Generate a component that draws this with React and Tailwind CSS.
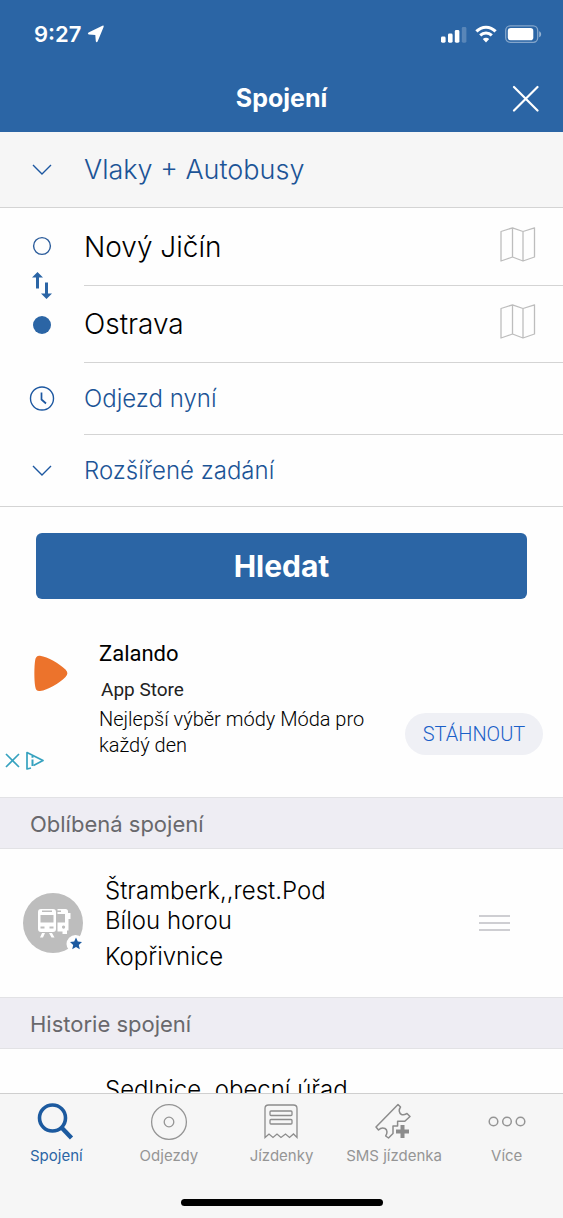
import React, { useState } from "react";

const Chevron = () => (
  <svg className="w-5 h-3" viewBox="0 0 20 12" fill="none" stroke="#1c57a0" strokeWidth="1.4">
    <path d="M1 1L10 10L19 1" />
  </svg>
);

const MapIcon = () => (
  <svg className="w-9 h-9" viewBox="0 0 36 36" fill="none" stroke="#bdbdbd" strokeWidth="1.3" strokeLinejoin="round">
    <path d="M1 4.5L12.5 .8L23 4.5L34.500 .8V30L23 34L12.500 30L1 34ZM12.500 .8V30M23 4.500V34" />
  </svg>
);

const StatusBar = () => (
  <div className="flex items-center justify-between h-[68px] pl-[34px] pr-[21px]">
    <div className="flex items-center gap-1.5">
      <span className="text-[22px] leading-7 font-semibold">9:27</span>
      <svg className="w-4.5 h-4.5" viewBox="0 0 18 18" fill="#fff">
        <path d="M15.4 .7Q17.200 .2 16.600 2L10.600 16.400Q9.600 18 8.800 16.200L8.300 10L1.800 9.400Q0 8.700 1.500 7.400Z" />
      </svg>
    </div>
    <div className="flex items-center gap-2">
      <svg className="w-[26px] h-[18px]" viewBox="0 0 26 18" fill="#fff">
        <rect x="0" y="11.500" width="4.600" height="6.200" rx="1.400" />
        <rect x="7" y="8.500" width="4.600" height="9.200" rx="1.400" />
        <rect x="13.800" y="5" width="4.600" height="12.700" rx="1.400" />
        <rect x="20.800" y="2" width="4.600" height="15.700" rx="1.400" opacity="0.22" />
      </svg>
      <svg className="w-[22px] h-[18px]" viewBox="0 0 22 18" fill="none" stroke="#fff" strokeWidth="3">
        <path d="M1.4 6.4C6.8 .7 15.2 .7 20.6 6.4" />
        <path d="M5.2 10.4C8.5 7.2 13.5 7.2 16.8 10.4" />
        <path d="M11 17.4L7.8 14.1C9.6 12.3 12.4 12.3 14.2 14.1Z" fill="#fff" stroke="none" />
      </svg>
      <svg className="w-[37px] h-[18px]" viewBox="0 0 37 18" fill="none">
        <rect x="0.7" y="0.900" width="32" height="16.400" rx="4.500" stroke="#fff" strokeOpacity="0.42" strokeWidth="1.3" />
        <rect x="2.800" y="3" width="25.500" height="12.200" rx="2.800" fill="#fff" />
        <path d="M34.200 6.200C36.800 7.200 36.800 11.200 34.200 12.200Z" fill="#fff" fillOpacity="0.5" />
      </svg>
    </div>
  </div>
);

const tabs = [
  {
    label: "Spojení",
    icon: (
      <g stroke="#1c5a9f" fill="none">
        <circle cx="15.500" cy="16" r="13" strokeWidth="3.6" />
        <path d="M24.500 25.500L34.500 36" strokeWidth="4.4" />
      </g>
    ),
  },
  {
    label: "Odjezdy",
    icon: (
      <g stroke="#959595" fill="none" strokeWidth="1.3">
        <circle cx="19" cy="20" r="17.4" />
        <circle cx="19" cy="20" r="4.8" />
      </g>
    ),
  },
  {
    label: "Jízdenky",
    icon: (
      <g stroke="#8c8c8c" fill="none" strokeWidth="1.3">
        <path d="M3 35.5V6.5Q3 3 6.5 3H31.500Q35 3 35 6.5V35.500L31.500 32L27.500 35.500L23.500 32L19 35.500L15 32L11 35.500L7 32Z" />
        <rect x="8" y="9" width="22" height="4.500" rx="1" />
        <rect x="8" y="17.500" width="22" height="4.500" rx="1" />
      </g>
    ),
  },
  {
    label: "SMS jízdenka",
    icon: (
      <g>
        <path
          d="M23 2.500L25.500 5C23.500 8 24 11 26.500 12.500C29 13.500 31 12 32 11.500L35 14.500L29.800 19.300H22.600V24H18V31.500L13.500 36L10.700 34C12.500 31 12.500 28 10 26.500C7.500 25.500 5 26.500 3.500 28L1 25L23 2.500Z"
          fill="none"
          stroke="#8c8c8c"
          strokeWidth="1.500"
          strokeLinejoin="round"
        />
        <path d="M27.500 23V36M21 29.500H34" stroke="#8c8c8c" strokeWidth="4" />
      </g>
    ),
  },
  {
    label: "Více",
    icon: (
      <g stroke="#959595" fill="none" strokeWidth="1.500">
        <circle cx="5.500" cy="19.500" r="4.300" />
        <circle cx="19" cy="19.500" r="4.300" />
        <circle cx="32.500" cy="19.500" r="4.300" />
      </g>
    ),
  },
];

const SectionTitle = ({ children }) => (
  <h2 className="h-[52px] flex items-center pt-0.5 pl-[30px] bg-[#eeedf3] border-y border-[#e2e2e5] text-[22px] leading-7 text-[#68686c]">
    {children}
  </h2>
);

export default function App() {
  const [from, setFrom] = useState("Nový Jičín");
  const [to, setTo] = useState("Ostrava");
  const [activeTab, setActiveTab] = useState("Spojení");

  const swapStations = () => {
    setFrom(to);
    setTo(from);
  };

  return (
    <div className="h-screen flex flex-col bg-[#fefefe] text-black font-[Inter,sans-serif]">
      {/* Header */}
      <header className="shrink-0 bg-[#2b65a5] text-white">
        <StatusBar />
        <div className="grid grid-cols-[1fr_auto_1fr] items-center h-16 px-6 pb-1">
          <h1 className="col-start-2 text-[25px] leading-8 font-bold">Spojení</h1>
          <button aria-label="Zavřít" className="justify-self-end">
            <svg className="w-[27px] h-[27px]" viewBox="0 0 27 27" stroke="#fff" strokeWidth="2.200" strokeLinecap="round">
              <path d="M2 2L25.500 25.500M25.500 2L2 25.500" />
            </svg>
          </button>
        </div>
      </header>

      <main className="flex-1 min-h-0 overflow-y-auto [scrollbar-width:none]">
        {/* Transport type */}
        <button className="w-full h-19 flex items-center bg-[#f6f6f6] border-b border-[#d4d4d4] text-[27px] leading-8 font-light text-[#1c5496]">
          <span className="w-[84px] flex justify-center">
            <Chevron />
          </span>
          Vlaky + Autobusy
        </button>

        {/* Search form */}
        <form onSubmit={(e) => e.preventDefault()}>
          <div className="flex">
            <div className="w-[84px] h-[155px] flex flex-col items-center justify-center gap-4">
              <svg className="w-5 h-5" viewBox="0 0 20 20" fill="none" stroke="#2b5c9b" strokeWidth="1.4">
                <circle cx="10" cy="10" r="8.400" />
              </svg>
              <button type="button" aria-label="Prohodit" onClick={swapStations}>
                <svg className="w-5 h-[27px]" viewBox="0 0 20 27" fill="#2b65a5">
                  <path d="M5.500 0L11 5.500H7V16.500H4V5.500H0Z" />
                  <path d="M14.500 27L9 21.500H13V10.500H16V21.500H20Z" />
                </svg>
              </button>
              <svg className="w-5 h-5" viewBox="0 0 20 20" fill="#2b65a5">
                <circle cx="10" cy="10" r="9" />
              </svg>
            </div>
            <div className="flex-1 min-w-0">
              <div className="h-[78px] flex items-center pr-[27px] border-b border-[#d4d4d4]">
                <input
                  aria-label="Odkud"
                  value={from}
                  onChange={(e) => setFrom(e.target.value)}
                  className="flex-1 min-w-0 text-[28px] leading-8 font-light outline-none"
                />
                <button type="button" aria-label="Vybrat na mapě" className="pb-1">
                  <MapIcon />
                </button>
              </div>
              <div className="h-[77px] flex items-center pr-[27px] border-b border-[#d4d4d4]">
                <input
                  aria-label="Kam"
                  value={to}
                  onChange={(e) => setTo(e.target.value)}
                  className="flex-1 min-w-0 text-[28px] leading-8 font-light outline-none"
                />
                <button type="button" aria-label="Vybrat na mapě" className="pb-1">
                  <MapIcon />
                </button>
              </div>
            </div>
          </div>

          <button type="button" className="w-full flex items-center text-[24px] leading-8 font-light text-[#1c5496]">
            <span className="w-[84px] flex justify-center">
              <svg className="w-[26px] h-[26px]" viewBox="0 0 26 26" fill="none" stroke="#1c57a0" strokeWidth="1.400">
                <circle cx="13" cy="12.500" r="11.500" />
                <path d="M12.500 6.500V13.500L17 17.500" strokeWidth="1.700" />
              </svg>
            </span>
            <span className="flex-1 h-18 flex items-center border-b border-[#d4d4d4]">Odjezd nyní</span>
          </button>
          <button
            type="button"
            className="w-full h-18 flex items-center border-b border-[#d4d4d4] text-[24px] leading-8 font-light text-[#1c5496]"
          >
            <span className="w-[84px] flex justify-center">
              <Chevron />
            </span>
            Rozšířené zadání
          </button>

          <div className="px-9 pt-[26px]">
            <button
              type="submit"
              className="w-full h-[66px] rounded-md bg-[#2b65a5] text-white text-[30px] leading-9 font-bold"
            >
              Hledat
            </button>
          </div>
        </form>

        {/* Ad */}
        <section className="relative h-[198px] flex pt-[39px] font-[Roboto,sans-serif]">
          <div className="w-[99px] shrink-0 pl-[34px] pt-[17px]">
            <svg className="w-[34px] h-[37px]" viewBox="0 0 34 37" fill="#ec732c">
              <path d="M6 .7C3 .4 1.700 2 1.200 5C.1 12 .1 24 1.200 31.500C1.700 35 3 36.300 6 36C14 35 25 28.500 31.500 22C34 19.300 34 17.300 31.500 14.600C25 8 14 2 6 .7Z" />
            </svg>
          </div>
          <div className="flex-1">
            <p className="text-[22px] leading-8">Zalando</p>
            <p className="pt-1 pl-0.5 text-[19px] leading-8 text-[#222]">App Store</p>
            <p className="text-[20px] leading-[26px] font-light">
              Nejlepší výběr módy Móda pro
              <br />
              každý den
            </p>
          </div>
          <button className="self-end mb-[42px] mr-5 h-[42px] w-[138px] rounded-full bg-[#eff0f5] text-[20px] font-light text-[#1a5fc8]">
            STÁHNOUT
          </button>
          <a href="#adchoices" aria-label="Volby reklam" className="absolute left-[5px] bottom-[27px]">
            <svg className="w-10 h-[19px]" viewBox="0 0 40 19" fill="none" stroke="#36a2bf" strokeWidth="1.700">
              <path d="M1 3L14 16M14 3L1 16" />
              <path d="M26 17L22 18V1.500L38 9.500L28.500 14.500" strokeLinejoin="round" />
              <path d="M27.500 5V6.800M27.500 8.500V15" strokeWidth="2" />
            </svg>
          </a>
        </section>

        {/* Favourites */}
        <SectionTitle>Oblíbená spojení</SectionTitle>
        <div className="h-[148px] flex items-center pl-[22px] pr-[53px]">
          <svg className="w-[62px] h-[62px] mr-[21px]" viewBox="0 0 62 62">
            <circle cx="31" cy="31" r="30" fill="#bdbdbd" />
            <g fill="#fff">
              <path
                fillRule="evenodd"
                d="M19 17H31Q34 17 34 20V37Q34 40 31 40H19Q16 40 16 37V20Q16 17 19 17ZM20 18.500V20H30V18.500ZM18.500 23V30.500H31.500V23ZM18.500 34.500V36.500H22.500V34.500ZM27.500 34.500V36.500H31.500V34.500Z"
              />
              <path d="M20 41H23L21 45.500H18ZM27 41H30L32.500 45.500H29.500Z" />
              <path
                fillRule="evenodd"
                d="M35.500 17H43.500Q46 17 46 19.500V21H48.500V27H46.500V38.500H45V42H40.500V39.500H35.500V30.500H43V22H35.500V20H39V18.500H35.500ZM41.500 33.500a1.600 1.600 0 1 0 .1 0Z"
              />
            </g>
            <circle cx="53.500" cy="52" r="9" fill="#fefefe" />
            <path
              d="M54 45.500L55.800 49.600L60 50L56.800 52.900L57.800 57.200L54 54.900L50.200 57.200L51.200 52.900L48 50L52.200 49.600Z"
              fill="#1c5aa0"
            />
          </svg>
          <div className="flex-1 pt-0.5 text-[24px] leading-[30px] font-light">
            <p>
              Štramberk,,rest.Pod
              <br />
              Bílou horou
            </p>
            <p className="pt-1.5">Kopřivnice</p>
          </div>
          <button aria-label="Přesunout">
            <svg className="w-[31px] h-[17px]" viewBox="0 0 31 17" stroke="#bfbfc3" strokeWidth="1.600">
              <path d="M0 1H31M0 8H31M0 15H31" />
            </svg>
          </button>
        </div>

        {/* History */}
        <SectionTitle>Historie spojení</SectionTitle>
        <div className="pl-[105px] py-[26px] text-[24px] leading-[30px] font-light">Sedlnice,,obecní úřad</div>
      </main>

      {/* Tab bar */}
      <nav className="shrink-0 bg-[#f6f6f6] border-t border-[#cfcfcf]">
        <div className="grid grid-cols-5">
          {tabs.map((tab) => (
            <button
              key={tab.label}
              onClick={() => setActiveTab(tab.label)}
              className={`flex flex-col items-center pt-2 text-[15px] leading-5 whitespace-nowrap ${
                activeTab === tab.label ? "text-[#2b65a5]" : "text-[#959595]"
              }`}
            >
              <svg className="w-[38px] h-11" viewBox="0 0 38 44">
                {tab.icon}
              </svg>
              {tab.label}
            </button>
          ))}
        </div>
        <div className="flex justify-center pt-[33px] pb-3">
          <div className="w-[202px] h-[7px] rounded-full bg-black" />
        </div>
      </nav>
    </div>
  );
}
